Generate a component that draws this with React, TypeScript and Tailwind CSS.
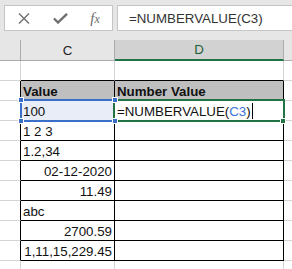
import React from "react";

type Row = { c: string; right?: boolean; header?: boolean; sel?: boolean };

const rows: Row[] = [
  { c: "Value", header: true },
  { c: "100", sel: true },
  { c: "1 2 3" },
  { c: "1.2,34" },
  { c: "02-12-2020", right: true },
  { c: "11.49", right: true },
  { c: "abc" },
  { c: "2700.59", right: true },
  { c: "1,11,15,229.45", right: true },
];

export default function App() {
  return (
    <div className="relative w-[292px] h-[269px] overflow-hidden bg-white font-['Liberation_Sans',Arial,sans-serif] text-[13.3px] leading-[15px] text-[#111]">
      {/* formula bar */}
      <div className="h-[40px] bg-[#e6e6e6] flex items-start pt-[5px] pl-[4px] gap-[4px]">
        <div className="w-[109px] h-[26px] shrink-0 bg-white border border-[#c6c6c6] flex items-center">
          <div className="w-[37px] flex justify-center pl-[1px]">
            <svg width="12" height="11" viewBox="0 0 12 11">
              <path d="M1 0.5 L11 10.5 M11 0.5 L1 10.5" stroke="#6f6f6f" strokeWidth="1.4" fill="none" />
            </svg>
          </div>
          <div className="w-[36px] flex justify-center">
            <svg width="15" height="11" viewBox="0 0 15 11">
              <path d="M1 5.5 L5 9.5 L14 0.8" stroke="#6f6f6f" strokeWidth="2.4" fill="none" />
            </svg>
          </div>
          <div className="w-[34px] flex justify-center">
            <span className="font-['Liberation_Serif',serif] italic text-[15px] text-[#6a6a6a] leading-none">
              f<span className="text-[12px]">x</span>
            </span>
          </div>
        </div>
        <div className="flex-1 h-[26px] bg-white border border-[#c6c6c6] border-r-0 flex items-center pl-[11px] text-[#333]">
          =NUMBERVALUE(C3)
        </div>
      </div>

      {/* column headers */}
      <div className="flex h-[21px] bg-[#e6e6e6]">
        <div className="w-[21px] shrink-0 border-r border-b border-[#ababab]" />
        <div className="w-[94px] shrink-0 border-r border-b border-[#ababab] flex items-center justify-center text-[#222]">
          C
        </div>
        <div className="w-[169px] shrink-0 bg-[#d2d2d2] border-r border-r-[#ababab] border-b-2 border-b-[#217346] flex items-center justify-center text-[#1d5f38]">
          D
        </div>
        <div className="flex-1 border-b border-[#ababab]" />
      </div>

      {/* row 2 blank */}
      <div className="flex h-[20px]">
        <div className="w-[21px] shrink-0 border-r border-b border-[#d4d4d4]" />
        <div className="w-[94px] shrink-0 border-r border-r-[#d4d4d4] border-b border-b-black" />
        <div className="w-[169px] shrink-0 border-r border-r-[#d4d4d4] border-b border-b-black" />
        <div className="flex-1 border-b border-[#d4d4d4]" />
      </div>

      {rows.map((r, i) => (
        <div key={i} className="flex h-[20px]">
          <div className="w-[21px] shrink-0 border-r border-r-black border-b border-b-[#d4d4d4]" />
          <div
            className={`w-[94px] shrink-0 border-r border-b border-black flex items-end pb-[1px] px-[2px] whitespace-nowrap ${
              r.right ? "justify-end" : "justify-start"
            } ${r.header ? "bg-[#bfbfbf] font-bold" : ""} ${r.sel ? "bg-[#e8edf7]" : ""}`}
          >
            {r.c}
          </div>
          <div
            className={`w-[169px] shrink-0 border-r border-b border-black flex items-end pb-[1px] px-[2px] whitespace-nowrap ${
              r.header ? "bg-[#bfbfbf] font-bold" : ""
            }`}
          >
            {r.header ? "Number Value" : ""}
            {r.sel ? (
              <span className="flex items-end">
                =NUMBERVALUE(<span className="text-[#3b73d6]">C3</span>)
                <span className="inline-block w-[1px] h-[16px] bg-black ml-[1px]" />
              </span>
            ) : null}
          </div>
          <div className="flex-1 border-b border-[#d4d4d4]" />
        </div>
      ))}

      {/* partial row */}
      <div className="flex h-[20px]">
        <div className="w-[21px] shrink-0 border-r border-[#d4d4d4]" />
        <div className="w-[94px] shrink-0 border-r border-[#d4d4d4]" />
        <div className="w-[169px] shrink-0 border-r border-[#d4d4d4]" />
        <div className="flex-1" />
      </div>

      {/* C3 reference highlight */}
      <div className="absolute left-[20px] top-[99px] w-[95px] h-[23px] border-2 border-[#3a6fc9]" />
      {/* D4 active cell */}
      <div className="absolute left-[113px] top-[99px] w-[172px] h-[23px] border-2 border-[#217346]" />
      <div className="absolute left-[280px] top-[118px] w-[4px] h-[4px] bg-[#217346] border border-white box-content" />
      {/* blue handles */}
      <div className="absolute left-[18px] top-[97px] w-[4px] h-[4px] bg-[#3a6fc9] border border-white box-content" />
      <div className="absolute left-[18px] top-[118px] w-[4px] h-[4px] bg-[#3a6fc9] border border-white box-content" />
      <div className="absolute left-[112px] top-[97px] w-[4px] h-[4px] bg-[#3a6fc9] border border-white box-content" />
      <div className="absolute left-[112px] top-[118px] w-[4px] h-[4px] bg-[#3a6fc9] border border-white box-content" />
    </div>
  );
}
